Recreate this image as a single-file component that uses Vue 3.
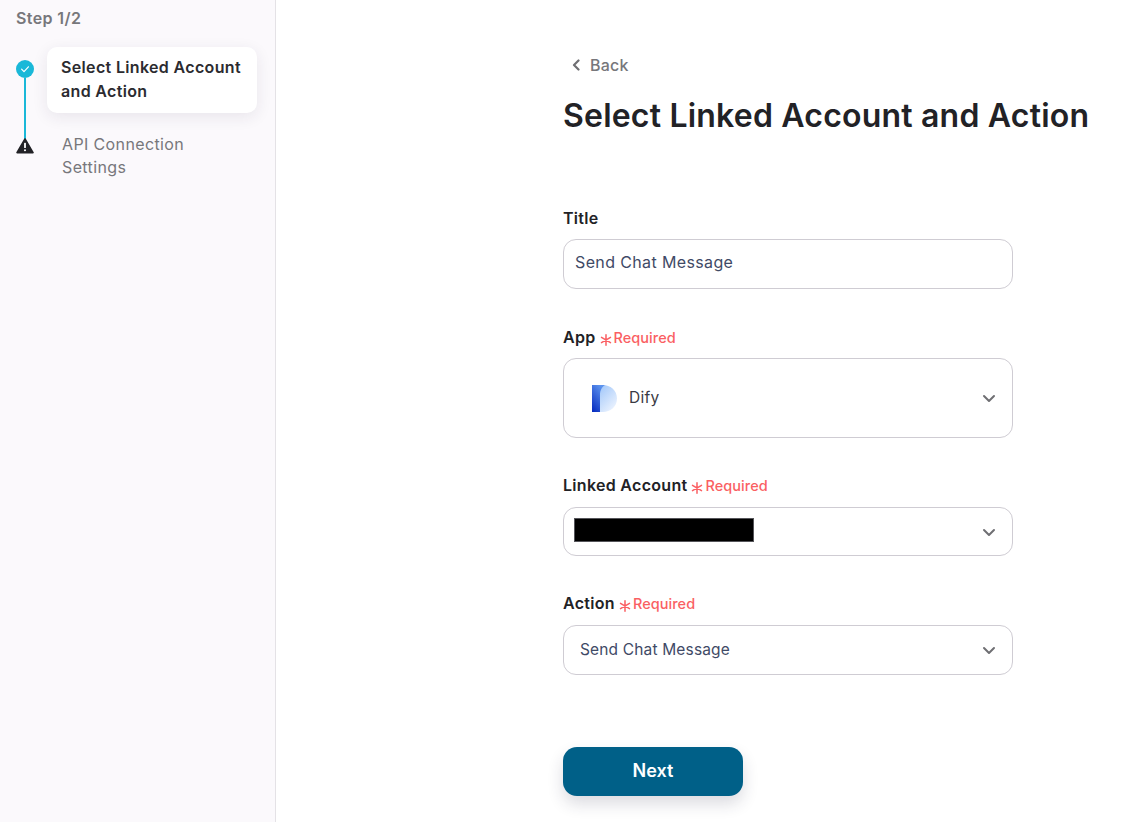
<script setup>
const steps = [
  { title: 'Select Linked Account and Action', active: true },
  { title: 'API Connection Settings', active: false }
]
</script>

<template>
  <div class="page">
    <aside class="side">
      <div class="step-count">Step 1/2</div>
      <div class="steps">
        <div class="rail">
          <svg class="done" width="18" height="18" viewBox="0 0 18 18">
            <circle cx="9" cy="9" r="9" fill="#1ab8d8" />
            <path d="M5.6 9.2l2.4 2.4 4.4-4.8" fill="none" stroke="#fff" stroke-width="1.2" stroke-linecap="round" stroke-linejoin="round" />
          </svg>
          <div class="line"></div>
          <svg class="warn" width="18" height="16" viewBox="0 0 18 16">
            <path d="M9 1L17 14.6H1z" fill="#222226" stroke="#222226" stroke-width="1.6" stroke-linejoin="round" />
            <rect x="8.1" y="4.8" width="1.8" height="5.2" rx=".6" fill="#fff" />
            <circle cx="9" cy="12.2" r="1.05" fill="#fff" />
          </svg>
        </div>
        <div class="labels">
          <div v-for="s in steps" :key="s.title" class="step" :class="{ active: s.active }">{{ s.title }}</div>
        </div>
      </div>
    </aside>

    <main class="main">
      <div class="back">
        <svg width="10" height="12" viewBox="0 0 10 12">
          <path d="M7.500 1.500L3 6l4.500 4.500" fill="none" stroke="#6f6f73" stroke-width="2.200" stroke-linecap="round" stroke-linejoin="round" />
        </svg>
        <span>Back</span>
      </div>
      <h1>Select Linked Account and Action</h1>

      <div class="form">
        <div class="field title-field">
          <div class="label">Title</div>
          <div class="box h50 text-val">Send Chat Message</div>
        </div>

        <div class="field app-field">
          <div class="label">App
            <span class="req">
              <svg class="star" width="12" height="12" viewBox="0 0 12 12"><path d="M6 .8v10.400M1.500 3.400l9 5.200M10.500 3.400l-9 5.200" stroke="#fa5f63" stroke-width="1.500" stroke-linecap="round" /></svg>Required
            </span>
          </div>
          <div class="box h80 sel app-box">
            <svg class="logo" width="25" height="27" viewBox="0 0 25 27">
              <defs>
                <linearGradient id="dl" x1="0" y1="1" x2=".6" y2="0">
                  <stop offset="0" stop-color="#0428be" />
                  <stop offset="1" stop-color="#5c93ee" />
                </linearGradient>
                <linearGradient id="dr" x1="0" y1="0" x2="1" y2="1">
                  <stop offset="0" stop-color="#8fbcf8" />
                  <stop offset="1" stop-color="#f6f9ff" />
                </linearGradient>
              </defs>
              <path d="M0 0h11c7 0 14 5 14 13.500S18 27 11 27H8V9H0z" fill="url(#dr)" />
              <path d="M0 0h13c-3 2-5 5-5 10v17H0z" fill="url(#dl)" />
            </svg>
            <span class="dify">Dify</span>
            <svg class="chev" width="14" height="9" viewBox="0 0 14 9"><path d="M2 2l5 5 5-5" fill="none" stroke="#6f6f73" stroke-width="2" stroke-linecap="round" stroke-linejoin="round" /></svg>
          </div>
        </div>

        <div class="field account-field">
          <div class="label gap11">Linked Account
            <span class="req">
              <svg class="star" width="12" height="12" viewBox="0 0 12 12"><path d="M6 .8v10.400M1.500 3.400l9 5.200M10.500 3.400l-9 5.200" stroke="#fa5f63" stroke-width="1.500" stroke-linecap="round" /></svg>Required
            </span>
          </div>
          <div class="box h49 sel account">
            <div class="redact"></div>
            <svg class="chev" width="14" height="9" viewBox="0 0 14 9"><path d="M2 2l5 5 5-5" fill="none" stroke="#6f6f73" stroke-width="2" stroke-linecap="round" stroke-linejoin="round" /></svg>
          </div>
        </div>

        <div class="field action-field">
          <div class="label gap11">Action
            <span class="req">
              <svg class="star" width="12" height="12" viewBox="0 0 12 12"><path d="M6 .8v10.400M1.500 3.400l9 5.200M10.500 3.400l-9 5.200" stroke="#fa5f63" stroke-width="1.500" stroke-linecap="round" /></svg>Required
            </span>
          </div>
          <div class="box h50 sel action">
            <span>Send Chat Message</span>
            <svg class="chev" width="14" height="9" viewBox="0 0 14 9"><path d="M2 2l5 5 5-5" fill="none" stroke="#6f6f73" stroke-width="2" stroke-linecap="round" stroke-linejoin="round" /></svg>
          </div>
        </div>

        <button class="next">Next</button>
      </div>
    </main>
  </div>
</template>

<style>
html, body { margin: 0; background: #fff; overflow: hidden; }
</style>

<style scoped>
.page {
  display: flex;
  height: 822px;
  font-family: Inter, "Liberation Sans", sans-serif;
  color: #222226;
  overflow: hidden;
}
.side {
  width: 275px;
  flex: none;
  box-sizing: content-box;
  background: #fbf9fc;
  border-right: 1px solid #e4e2e6;
  padding-top: 9px;
}
.step-count {
  margin-left: 16px;
  font-size: 16px;
  line-height: 18px;
  font-weight: 600;
  letter-spacing: .4px;
  color: #77777b;
}
.steps {
  display: flex;
  margin-top: 20px;
  margin-left: 16px;
}
.rail {
  width: 18px;
  padding-top: 13px;
  display: flex;
  flex-direction: column;
  align-items: center;
}
.rail svg { display: block; flex: none; }
.line {
  width: 2px;
  height: 61px;
  background: #1ab8d8;
}
.warn { margin-top: -1px; }
.labels {
  margin-left: 13px;
  width: 210px;
}
.step {
  box-sizing: border-box;
  font-size: 16px;
  line-height: 23px;
  letter-spacing: .37px;
  color: #77777b;
  padding: 0 15px;
  margin-top: 20px;
}
.step.active {
  margin-top: 0;
  height: 66px;
  padding: 8px 14px;
  line-height: 24px;
  background: #fff;
  border-radius: 10px;
  color: #2b2b30;
  font-weight: 600;
  letter-spacing: .34px;
  box-shadow: 0 4px 16px rgba(40, 30, 70, .09);
}
.main {
  flex: 1;
  padding-left: 287px;
  padding-top: 55px;
  min-width: 0;
}
.back {
  display: flex;
  align-items: center;
  gap: 9px;
  margin-left: 8px;
  height: 19px;
  font-size: 16px;
  letter-spacing: .2px;
  font-weight: 500;
  color: #77777b;
}
h1 {
  margin: 20px 0 0;
  font-size: 32px;
  line-height: 44px;
  font-weight: 600;
  letter-spacing: .2px;
  color: #222226;
  white-space: nowrap;
}
.form { width: 450px; }
.field { display: flex; flex-direction: column; }
.title-field { margin-top: 70px; }
.app-field { margin-top: 38px; }
.account-field { margin-top: 37px; }
.action-field { margin-top: 37px; }
.label {
  height: 20px;
  font-size: 16px;
  line-height: 20px;
  font-weight: 600;
  letter-spacing: .3px;
  display: flex;
  align-items: center;
  gap: 4px;
  margin-bottom: 11px;
}
.label.gap11 { margin-bottom: 12px; }
.req {
  display: inline-flex;
  align-items: center;
  font-size: 14.500px;
  font-weight: 500;
  letter-spacing: .05px;
  color: #fa5f63;
  transform: translateY(1px);
}
.star {
  margin-right: 2px;
  margin-top: 3px;
  flex: none;
}
.box {
  box-sizing: border-box;
  border: 1px solid #cfccd3;
  border-radius: 13px;
  display: flex;
  align-items: center;
  background: #fff;
}
.h50 { height: 50px; }
.h49 { height: 49px; }
.h80 { height: 80px; }
.text-val {
  font-size: 16px;
  letter-spacing: .37px;
  color: #3f4a66;
  padding-left: 11px;
  padding-bottom: 5px;
}
.sel { position: relative; }
.chev {
  position: absolute;
  right: 16px;
  top: 50%;
  margin-top: -4px;
}
.logo { margin-left: 28px; margin-top: 1px; }
.dify {
  margin-left: 12px;
  margin-bottom: 2px;
  font-size: 15.500px;
  letter-spacing: .3px;
  color: #3a3a44;
}
.redact {
  box-sizing: border-box;
  margin-left: 10px;
  margin-bottom: 3px;
  width: 180px;
  height: 24px;
  background: #000;
  border: 1px solid #55555a;
}
.action {
  padding-left: 16px;
  padding-bottom: 2px;
  font-size: 15.500px;
  letter-spacing: .16px;
  color: #3f4a66;
}
.next {
  display: block;
  margin-top: 72px;
  width: 180px;
  height: 49px;
  border: 0;
  border-radius: 14px;
  padding-bottom: 3px;
  background: #006088;
  color: #fff;
  font-family: inherit;
  font-size: 18px;
  font-weight: 600;
  box-shadow: 0 8px 16px rgba(40, 40, 70, .16);
}
</style>
